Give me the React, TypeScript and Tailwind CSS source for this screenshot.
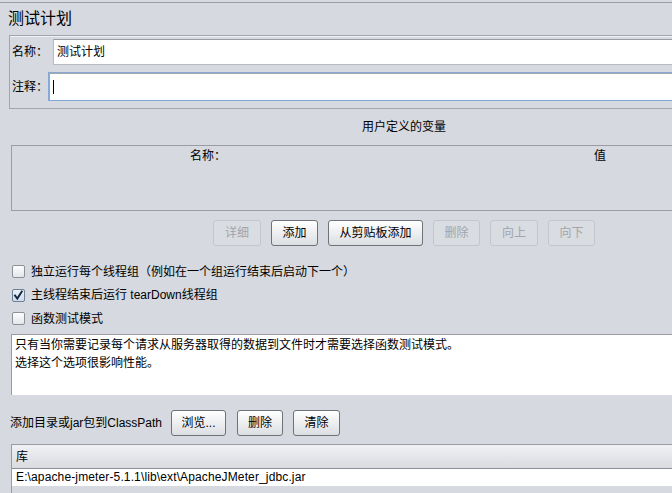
import React from "react";

const FONT = "font-['Liberation_Sans','Noto_Sans_CJK_SC',sans-serif]";

function Btn({ label, w, disabled }: { label: string; w: string; disabled?: boolean }) {
  return (
    <div
      className={
        "h-[26px] flex items-center justify-center rounded-[3px] border text-[12px] " +
        w +
        " " +
        (disabled
          ? "border-[#c3c6cc] bg-[#d9dce1] text-[#a2a5ab]"
          : "border-[#6f7278] bg-gradient-to-b from-[#ffffff] to-[#dcdee2] text-black shadow-[inset_0_1px_0_#ffffff]")
      }
    >
      {label}
    </div>
  );
}

function Check({ checked, label }: { checked?: boolean; label: React.ReactNode }) {
  return (
    <div className="h-[23.5px] flex items-center pl-[12px]">
      <div
        className={
          "w-[13px] h-[13px] rounded-[2px] border flex items-center justify-center " +
          (checked
            ? "border-[#6e7f96] bg-gradient-to-b from-[#e9f0f8] to-[#cfdbea]"
            : "border-[#8d9096] bg-gradient-to-b from-[#fdfdfd] to-[#e4e6ea]")
        }
      >
        {checked && (
          <svg width="11" height="11" viewBox="0 0 11 11">
            <path d="M2 5.5 L4.3 8.6 L8.8 1.6" stroke="#14233f" strokeWidth="1.9" fill="none" strokeLinecap="square" />
          </svg>
        )}
      </div>
      <div className="ml-[6px] text-[12px] leading-none">{label}</div>
    </div>
  );
}

export default function App() {
  return (
    <div className={"w-[672px] h-[493px] overflow-hidden bg-[#d6d9df] text-black " + FONT}>
      <div className="w-[800px]">
        <div className="h-[2px]" />
        <div className="h-px bg-[#9a9da5]" />
        <div className="h-[32px] pl-[8px] flex items-center text-[16px]">测试计划</div>

        {/* name / comment panel */}
        <div className="ml-[9px] h-[74px] border border-[#a2a5ac] pt-[3px] shadow-[inset_0_1px_0_#eef0f3]">
          <div className="h-[26px] flex items-center">
            <div className="w-[43px] pl-[2px] text-[12px]">名称：</div>
            <div className="flex-1 h-full bg-white border border-[#b8babe] border-t-[#9a9ca0] flex items-center pl-[3px] text-[12px]">
              测试计划
            </div>
          </div>
          <div className="h-[29px] mt-[7px] flex items-center">
            <div className="w-[38px] pl-[2px] text-[12px]">注释：</div>
            <div className="flex-1 h-full bg-white border border-[#86a9d4] shadow-[inset_1px_1px_0_#a4a6aa] flex items-center pl-[4px]">
              <div className="w-px h-[14px] bg-black" />
            </div>
          </div>
        </div>

        {/* user defined variables */}
        <div className="ml-[11px] w-[786px]">
          <div className="h-[36px] flex items-center justify-center text-[12px]">用户定义的变量</div>
          <div className="h-[66px] border border-[#9a9da4]">
            <div className="grid grid-cols-2 h-[20px] text-[12px]">
              <div className="flex items-center justify-center">名称：</div>
              <div className="flex items-center justify-center">值</div>
            </div>
          </div>
          <div className="mt-[9px] flex justify-center gap-[10px]">
            <Btn label="详细" w="w-[48px]" disabled />
            <Btn label="添加" w="w-[47px]" />
            <Btn label="从剪贴板添加" w="w-[95px]" />
            <Btn label="删除" w="w-[47px]" disabled />
            <Btn label="向上" w="w-[48px]" disabled />
            <Btn label="向下" w="w-[47px]" disabled />
          </div>
        </div>

        {/* checkboxes */}
        <div className="mt-[14px]">
          <Check label="独立运行每个线程组（例如在一个组运行结束后启动下一个）" />
          <Check checked label="主线程结束后运行 tearDown线程组" />
          <Check label="函数测试模式" />
        </div>

        {/* description */}
        <div className="mt-[3px] ml-[11px] h-[61px] bg-white border-t border-l border-[#9a9ca2] pt-[1px] pl-[3px] text-[12px] leading-[18px]">
          <div>只有当你需要记录每个请求从服务器取得的数据到文件时才需要选择函数测试模式。</div>
          <div>选择这个选项很影响性能。</div>
        </div>

        {/* classpath */}
        <div className="mt-[15px] h-[26px] flex items-center pl-[10px]">
          <div className="text-[12px] mr-[9px]">添加目录或jar包到ClassPath</div>
          <Btn label="浏览..." w="w-[55px]" />
          <div className="w-[11px]" />
          <Btn label="删除" w="w-[46px]" />
          <div className="w-[10px]" />
          <Btn label="清除" w="w-[47px]" />
        </div>

        {/* library table */}
        <div className="mt-[8px] ml-[11px] h-[60px] border-l border-t border-[#9a9ca2]">
          <div className="h-[24px] bg-gradient-to-b from-[#f0f1f4] to-[#d9dbe0] border-b border-[#8c8f95] flex items-center pl-[4px] pt-[2px] text-[12px]">
            库
          </div>
          <div className="h-[17px] bg-white flex items-center pl-[4px] text-[12px] tracking-[0.13px]">
            E:\apache-jmeter-5.1.1\lib\ext\ApacheJMeter_jdbc.jar
          </div>
        </div>
      </div>
    </div>
  );
}
